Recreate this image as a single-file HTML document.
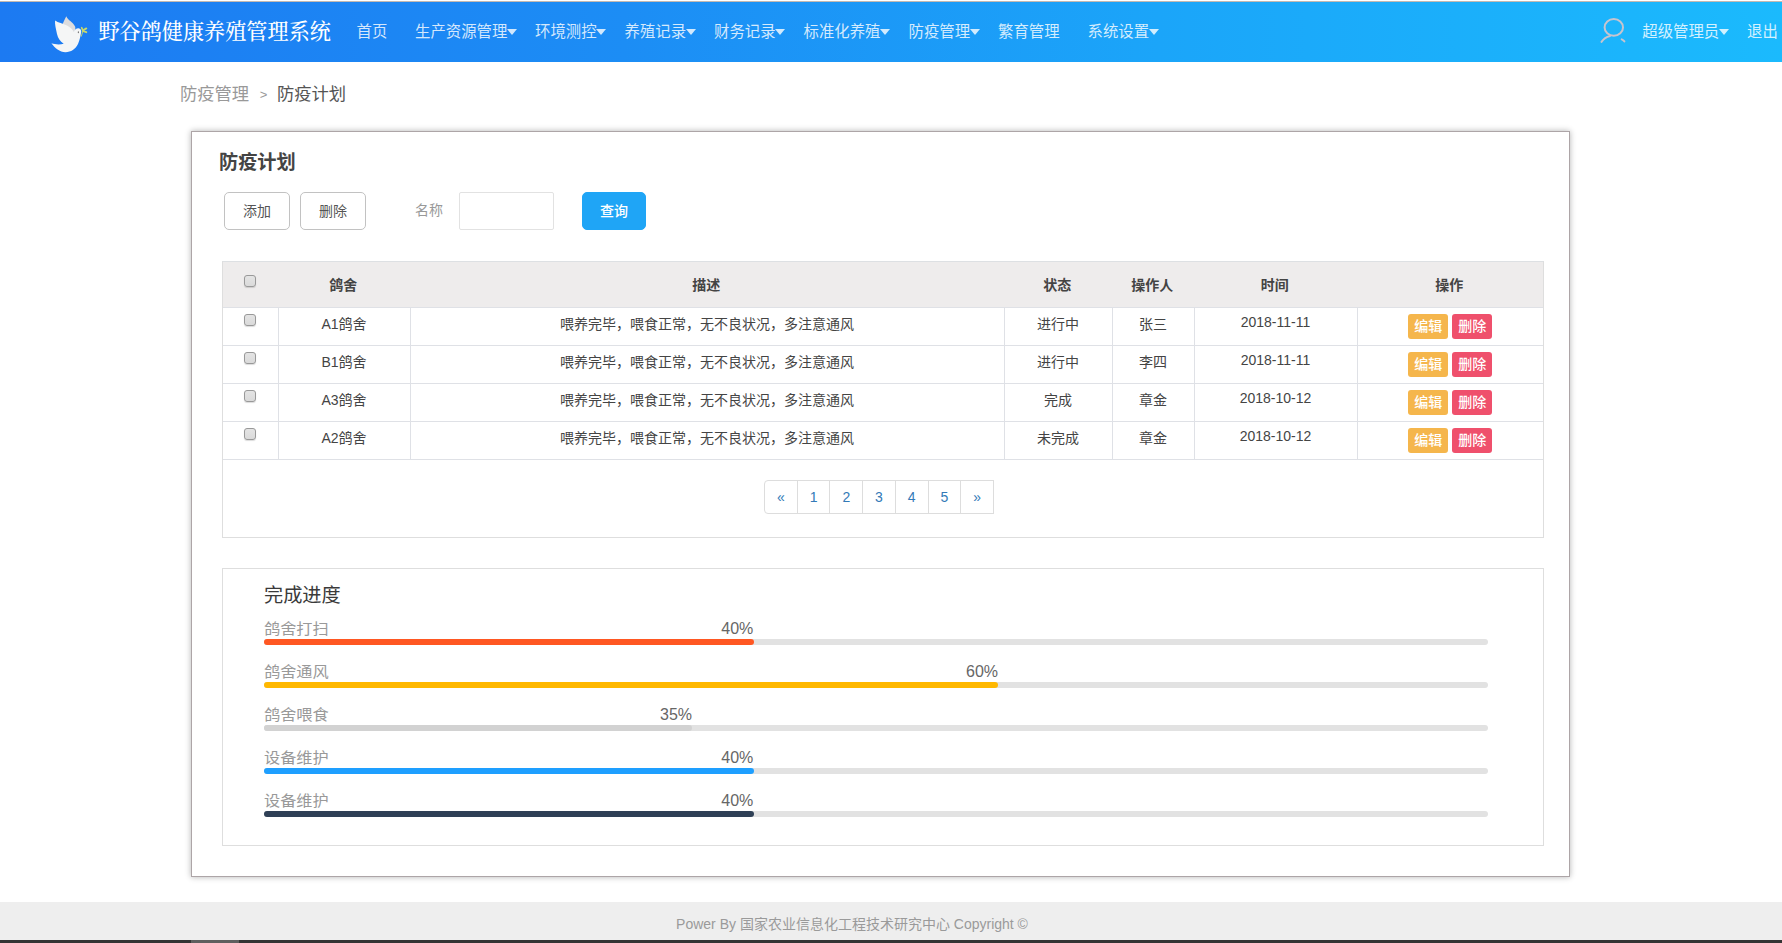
<!DOCTYPE html>
<html lang="zh-CN">
<head>
<meta charset="utf-8">
<title>野谷鸽健康养殖管理系统</title>
<style>
*{box-sizing:border-box;margin:0;padding:0}
html,body{width:1782px;height:943px;overflow:hidden;background:#fff}
body{position:relative;font-family:"Liberation Sans","Noto Sans CJK SC",sans-serif;font-size:14px;color:#333}
.abs{position:absolute}
#topline{left:0;top:1px;width:1782px;height:1px;background:#c3b9b2}
#header{left:0;top:2px;width:1782px;height:60px;background:linear-gradient(90deg,#1c7af2 0%,#1c8df5 35%,#1ba5f9 65%,#1bbafd 100%)}
#title{left:98.4px;top:0;height:60px;line-height:61.9px;font-family:"Liberation Serif","Noto Serif CJK SC",serif;font-size:21.15px;color:#fff;white-space:nowrap;font-weight:500}
.nav{position:absolute;top:0;height:60px;line-height:59px;font-size:15.4px;color:rgba(255,255,255,.81);white-space:nowrap}
.caret{display:inline-block;width:0;height:0;border-top:6px solid rgba(255,255,255,.8);border-left:5px solid transparent;border-right:5px solid transparent;vertical-align:middle;margin-top:-1px;margin-left:-0.5px}
#crumb{left:180px;top:81.3px;height:26px;line-height:26px;font-size:17.3px;color:#999;white-space:nowrap}
#crumb b{font-weight:normal;color:#555}
#crumb i{font-style:normal;font-size:13px;margin:0 9.6px 0 10.6px;color:#999;position:relative;top:-1px}
#panel{left:191px;top:131px;width:1379px;height:746px;background:#fff;border:1px solid #ada5a7;box-shadow:0 0 6px rgba(0,0,0,.3)}
#h1{left:219px;top:149px;font-size:19.2px;font-weight:bold;color:#444;line-height:28px;white-space:nowrap}
.btn{position:absolute;top:192px;height:38px;border:1px solid #c2c2c2;border-radius:5px;background:#fff;text-align:center;line-height:36.6px;font-size:14px;color:#555}
#q{left:582px;width:64px;background:#1fa5f6;border-color:#1fa5f6;color:#fff;font-weight:500}
#lbl{left:415px;top:192px;line-height:37px;font-size:14px;color:#999}
#inp{left:459px;top:192px;width:95px;height:38px;border:1px solid #e2e2e2;border-radius:2px;background:#fff}
#tbox{left:222px;top:261px;width:1322px;height:277px;border:1px solid #dedede;border-top-color:#dde0e3}
table{border-collapse:collapse;table-layout:fixed;width:1320px;position:absolute;left:0;top:0}
th{height:45px;background:#eeecec;font-size:14px;font-weight:bold;color:#444;text-align:center;vertical-align:middle;border-bottom:1px solid #dfe1e6;padding-right:1.5px}
td{height:38px;font-size:14px;color:#444;text-align:center;vertical-align:top;border:1px solid #dfe1e6;padding-top:6px;line-height:21px;white-space:nowrap}
td:first-child{border-left:0}
td:last-child{border-right:0}
td.d{padding-top:4.5px}
.cb{display:inline-block;width:12px;height:12px;border:1px solid #999;border-radius:3px;background:linear-gradient(#e4e4e4,#dadada);box-shadow:0 1px 1px rgba(0,0,0,.14);vertical-align:top}
th .cb{margin-top:-10px;vertical-align:middle}
td .cb{margin-top:0}
.e,.x{display:inline-block;width:40px;height:25px;line-height:25px;border-radius:3px;color:#fff;font-size:14px;font-weight:500;vertical-align:top;margin-top:0}
.e{background:#f5b64c;margin-right:4px}
.x{background:#ef506c}
#pg{left:764px;top:480px;height:34px;display:flex}
#pg span{display:block;flex:none;width:33.72px;height:34px;border:1px solid #ddd;margin-left:-1px;line-height:32px;text-align:center;color:#337ab7;font-size:14px;background:#fff}
#pg span:first-child{margin-left:0;width:33.72px;border-radius:4px 0 0 4px}
#pbox{left:222px;top:568px;width:1322px;height:278px;border:1px solid #dedede}
#ptitle{left:264px;top:582.6px;font-size:19.2px;line-height:26px;color:#3a3a3a;white-space:nowrap}
.pl{position:absolute;left:264px;margin-top:-1px;font-size:16.2px;line-height:20px;transform:scaleY(.93);transform-origin:50% 55%;color:#999;white-space:nowrap}
.pb{position:absolute;left:264px;width:1224px;height:6px;border-radius:3px;background:#e2e2e2}
.pf{position:absolute;left:0;top:0;height:6px;border-radius:3px}
.pt{position:absolute;right:0.3px;top:-19.5px;font-size:16px;line-height:18px;color:#666;white-space:nowrap}
#footer{left:0;top:902px;width:1782px;height:38px;background:#eee;text-align:center;line-height:44px;font-size:14px;color:#9a9a9a;padding-right:78px}
#dark{left:0;top:940px;width:1782px;height:3px;background:#343434}
#dark i{position:absolute;left:191px;top:0;width:48px;height:3px;background:#5f5f5f}
</style>
</head>
<body>
<div class="abs" id="topline"></div>
<div class="abs" id="header">
<svg class="abs" style="left:46px;top:10px" width="48" height="44" viewBox="0 0 48 44">
<path d="M16.4 12.4C17.8 9.4 19.2 6.6 20.3 4.3C21.8 8.2 27.4 10.4 29.2 14.8C29.7 16.6 28.9 19 27.9 21.4L21 16Z" fill="#dcdcde"/>
<path d="M9.1 8.4C12 10.5 17 11.5 21 13.5C24.5 15.2 26.8 17.5 27.8 20C28.5 17.5 30.5 16.2 32.5 16.3C34.6 16.4 35.7 18.5 35 21C34.4 24 33.8 28 32 32C29.5 37 25 40.2 19.5 40.2C13.5 40.2 9 36 5.4 31.3C9 32.5 14 32.8 17.7 31.7C14 29.5 12 26 11 22C10 17 8.6 12 9.1 8.4Z" fill="#f5f6f6"/>
<ellipse cx="32.4" cy="20.2" rx="0.65" ry="0.95" fill="#7a7a7a"/>
<g stroke="#d8e160" stroke-linecap="round" fill="none" opacity=".92">
<path d="M36.9 18.8L35.4 24.2" stroke-width="0.9"/>
<path d="M36.8 18.4L35.7 15.7" stroke-width="1.7"/>
<path d="M37.1 18.3L40.3 16.4" stroke-width="1.9"/>
<path d="M37.3 19.1L40.3 20.2" stroke-width="1.9"/>
</g>
</svg>
<div class="abs" id="title">野谷鸽健康养殖管理系统</div>
<div class="nav" style="left:356.5px">首页</div>
<div class="nav" style="left:415px">生产资源管理<span class="caret"></span></div>
<div class="nav" style="left:535px">环境测控<span class="caret"></span></div>
<div class="nav" style="left:624.5px">养殖记录<span class="caret"></span></div>
<div class="nav" style="left:714px">财务记录<span class="caret"></span></div>
<div class="nav" style="left:803.5px">标准化养殖<span class="caret"></span></div>
<div class="nav" style="left:908.5px">防疫管理<span class="caret"></span></div>
<div class="nav" style="left:998px">繁育管理</div>
<div class="nav" style="left:1087.5px">系统设置<span class="caret"></span></div>
<svg class="abs" style="left:1598px;top:14px" width="30" height="30" viewBox="0 0 30 30">
<g fill="none" stroke="#c7c4ce" stroke-width="2" stroke-linecap="round">
<ellipse cx="15.8" cy="11.4" rx="9.2" ry="8.4"/>
<path d="M3.5 25.9C5.6 22.8 8.6 20.9 12 20"/>
<path d="M23.7 23.3C24.9 23.8 25.8 24.6 26.4 25.4"/>
</g>
</svg>
<div class="nav" style="left:1642.3px">超级管理员<span class="caret"></span></div>
<div class="nav" style="left:1747.1px">退出</div>
</div>

<div class="abs" id="crumb">防疫管理<i>&gt;</i><b>防疫计划</b></div>

<div class="abs" id="panel"></div>
<div class="abs" id="h1">防疫计划</div>
<div class="btn" style="left:224px;width:66px">添加</div>
<div class="btn" style="left:300px;width:66px">删除</div>
<div class="abs" id="lbl">名称</div>
<div class="abs" id="inp"></div>
<div class="btn" id="q">查询</div>

<div class="abs" id="tbox">
<table>
<colgroup><col style="width:55px"><col style="width:132px"><col style="width:594px"><col style="width:108px"><col style="width:82px"><col style="width:163px"><col style="width:186px"></colgroup>
<tr><th><span class="cb"></span></th><th>鸽舍</th><th>描述</th><th>状态</th><th>操作人</th><th>时间</th><th>操作</th></tr>
<tr><td><span class="cb"></span></td><td>A1鸽舍</td><td>喂养完毕，喂食正常，无不良状况，多注意通风</td><td>进行中</td><td>张三</td><td class="d">2018-11-11</td><td><span class="e">编辑</span><span class="x">删除</span></td></tr>
<tr><td><span class="cb"></span></td><td>B1鸽舍</td><td>喂养完毕，喂食正常，无不良状况，多注意通风</td><td>进行中</td><td>李四</td><td class="d">2018-11-11</td><td><span class="e">编辑</span><span class="x">删除</span></td></tr>
<tr><td><span class="cb"></span></td><td>A3鸽舍</td><td>喂养完毕，喂食正常，无不良状况，多注意通风</td><td>完成</td><td>章金</td><td class="d">2018-10-12</td><td><span class="e">编辑</span><span class="x">删除</span></td></tr>
<tr><td><span class="cb"></span></td><td>A2鸽舍</td><td>喂养完毕，喂食正常，无不良状况，多注意通风</td><td>未完成</td><td>章金</td><td class="d">2018-10-12</td><td><span class="e">编辑</span><span class="x">删除</span></td></tr>
</table>
</div>
<div class="abs" id="pg"><span>«</span><span>1</span><span>2</span><span>3</span><span>4</span><span>5</span><span>»</span></div>

<div class="abs" id="pbox"></div>
<div class="abs" id="ptitle">完成进度</div>
<div class="pl" style="top:619px">鸽舍打扫</div>
<div class="pb" style="top:639px"><div class="pf" style="width:40%;background:#ff5722"><span class="pt">40%</span></div></div>
<div class="pl" style="top:662px">鸽舍通风</div>
<div class="pb" style="top:682px"><div class="pf" style="width:60%;background:#ffb800"><span class="pt">60%</span></div></div>
<div class="pl" style="top:705px">鸽舍喂食</div>
<div class="pb" style="top:725px"><div class="pf" style="width:35%;background:#d2d2d2"><span class="pt">35%</span></div></div>
<div class="pl" style="top:748px">设备维护</div>
<div class="pb" style="top:768px"><div class="pf" style="width:40%;background:#1e9fff"><span class="pt">40%</span></div></div>
<div class="pl" style="top:791px">设备维护</div>
<div class="pb" style="top:811px"><div class="pf" style="width:40%;background:#2f4056"><span class="pt">40%</span></div></div>

<div class="abs" id="footer">Power By 国家农业信息化工程技术研究中心 Copyright ©</div>
<div class="abs" id="dark"><i></i></div>
</body>
</html>
